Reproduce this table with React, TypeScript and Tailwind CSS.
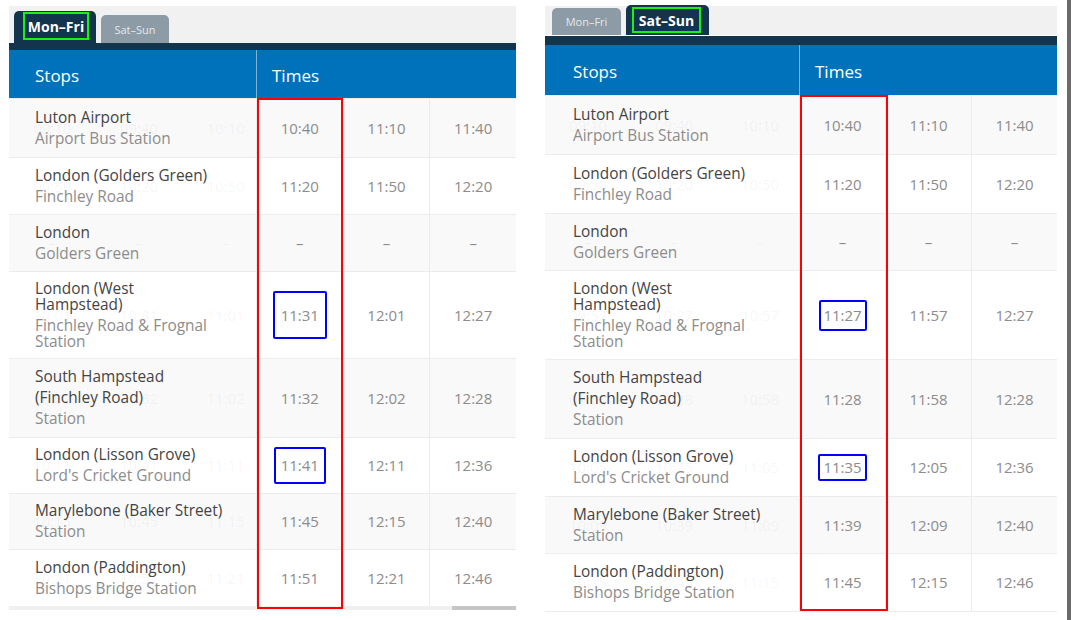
import React from "react";

type Block = { lines: string[]; sub?: boolean };
type Row = { blocks: Block[]; h: string; t: string[]; g: string[]; box?: string };

const leftRows: Row[] = [
  { blocks: [{ lines: ["Luton Airport"] }, { lines: ["Airport Bus Station"], sub: true }], h: "h-[59px]", t: ["10:40", "11:10", "11:40"], g: ["09:10", "09:40", "10:10"] },
  { blocks: [{ lines: ["London (Golders Green)"] }, { lines: ["Finchley Road"], sub: true }], h: "h-[57px]", t: ["11:20", "11:50", "12:20"], g: ["09:50", "10:20", "10:50"] },
  { blocks: [{ lines: ["London"] }, { lines: ["Golders Green"], sub: true }], h: "h-[57px]", t: ["–", "–", "–"], g: ["–", "–", "–"] },
  { blocks: [{ lines: ["London (West", "Hampstead)"] }, { lines: ["Finchley Road & Frognal", "Station"], sub: true }], h: "h-[87px]", t: ["11:31", "12:01", "12:27"], g: ["10:01", "10:31", "11:01"], box: "w-[54px] h-[48px]" },
  { blocks: [{ lines: ["South Hampstead"] }, { lines: ["(Finchley Road)"] }, { lines: ["Station"], sub: true }], h: "h-[79px]", t: ["11:32", "12:02", "12:28"], g: ["10:02", "10:32", "11:02"] },
  { blocks: [{ lines: ["London (Lisson Grove)"] }, { lines: ["Lord's Cricket Ground"], sub: true }], h: "h-[56px]", t: ["11:41", "12:11", "12:36"], g: ["10:11", "10:41", "11:11"], box: "w-[52px] h-[37px]" },
  { blocks: [{ lines: ["Marylebone (Baker Street)"] }, { lines: ["Station"], sub: true }], h: "h-[56px]", t: ["11:45", "12:15", "12:40"], g: ["10:15", "10:45", "11:15"] },
  { blocks: [{ lines: ["London (Paddington)"] }, { lines: ["Bishops Bridge Station"], sub: true }], h: "h-[57px]", t: ["11:51", "12:21", "12:46"], g: ["10:21", "10:51", "11:21"] },
];

const rightRows: Row[] = [
  { blocks: [{ lines: ["Luton Airport"] }, { lines: ["Airport Bus Station"], sub: true }], h: "h-[59px]", t: ["10:40", "11:10", "11:40"], g: ["09:10", "09:40", "10:10"] },
  { blocks: [{ lines: ["London (Golders Green)"] }, { lines: ["Finchley Road"], sub: true }], h: "h-[59px]", t: ["11:20", "11:50", "12:20"], g: ["09:50", "10:20", "10:50"] },
  { blocks: [{ lines: ["London"] }, { lines: ["Golders Green"], sub: true }], h: "h-[57px]", t: ["–", "–", "–"], g: ["–", "–", "–"] },
  { blocks: [{ lines: ["London (West", "Hampstead)"] }, { lines: ["Finchley Road & Frognal", "Station"], sub: true }], h: "h-[89px]", t: ["11:27", "11:57", "12:27"], g: ["09:57", "10:27", "10:57"], box: "w-[48px] h-[31px]" },
  { blocks: [{ lines: ["South Hampstead"] }, { lines: ["(Finchley Road)"] }, { lines: ["Station"], sub: true }], h: "h-[79px]", t: ["11:28", "11:58", "12:28"], g: ["09:58", "10:28", "10:58"] },
  { blocks: [{ lines: ["London (Lisson Grove)"] }, { lines: ["Lord's Cricket Ground"], sub: true }], h: "h-[58px]", t: ["11:35", "12:05", "12:36"], g: ["10:05", "10:35", "11:05"], box: "w-[49px] h-[27px]" },
  { blocks: [{ lines: ["Marylebone (Baker Street)"] }, { lines: ["Station"], sub: true }], h: "h-[57px]", t: ["11:39", "12:09", "12:40"], g: ["10:09", "10:39", "11:09"] },
  { blocks: [{ lines: ["London (Paddington)"] }, { lines: ["Bishops Bridge Station"], sub: true }], h: "h-[58px]", t: ["11:45", "12:15", "12:46"], g: ["10:15", "10:45", "11:15"] },
];

function Table({
  rows,
  stopW,
  colW,
  headerH,
  stopPad,
}: {
  rows: Row[];
  stopW: string;
  colW: string;
  headerH: string;
  stopPad: string;
}) {
  return (
    <div className="flex flex-col">
      <div className={`flex bg-[#0072bb] text-white text-[17px] ${headerH}`}>
        <div className={`flex items-center pt-[4px] shrink-0 ${stopW} ${stopPad}`}>Stops</div>
        <div className="flex flex-1 items-center pt-[4px] pl-[15px] border-l border-[#7fb2da]">Times</div>
      </div>
      {rows.map((r, i) => (
        <div
          key={i}
          className={`flex border-t border-[#ececec] ${r.h} ${i % 2 === 0 ? "bg-[#f9f9f9]" : "bg-white"}`}
        >
          <div className={`grid overflow-hidden shrink-0 ${stopW}`}>
            <div className="col-start-1 row-start-1 flex justify-end items-center">
              {r.g.map((x, j) => (
                <div key={j} className={`shrink-0 text-center text-[15px] text-black/[0.05] ${colW}`}>
                  {x}
                </div>
              ))}
            </div>
            <div className={`col-start-1 row-start-1 flex flex-col justify-center gap-[5px] text-[15.4px] leading-[16px] ${stopPad}`}>
              {r.blocks.map((b, k) => (
                <div key={k} className={b.sub ? "text-[#8c8c8c]" : "text-[#444444]"}>
                  {b.lines.map((l, m) => (
                    <div key={m}>{l}</div>
                  ))}
                </div>
              ))}
            </div>
          </div>
          {r.t.map((x, j) => (
            <div
              key={j}
              className={`flex shrink-0 items-center justify-center border-l border-[#ececec] text-[15px] text-[#8c8c8c] ${colW}`}
            >
              {j === 0 && r.box ? (
                <span className={`flex items-center justify-center border-2 border-[#0000ff] rounded-[2px] ${r.box}`}>
                  {x}
                </span>
              ) : (
                <span>{x}</span>
              )}
            </div>
          ))}
        </div>
      ))}
    </div>
  );
}

export default function App() {
  return (
    <div
      className="flex h-[620px] w-[1071px] bg-white overflow-hidden"
      style={{ fontFamily: '"Open Sans", "Noto Sans", sans-serif' }}
    >
      {/* Left panel */}
      <div className="relative ml-[9px] mt-[6px] w-[507px] flex flex-col self-start">
        <div className="flex items-end h-[37px] bg-[#f1f1f1] pl-[5px] gap-[5px]">
          <div className="flex items-start h-[32px] w-[82px] rounded-t-[5px] bg-[#13344d] pl-[9px] pt-[1px]">
            <span className="flex items-center justify-center w-[66px] h-[28px] border-2 border-[#19f219] text-white font-bold text-[14px]">
              Mon–Fri
            </span>
          </div>
          <div className="flex items-center justify-center h-[28px] w-[68px] rounded-t-[5px] bg-[#8c9ba5] text-[#e4e8eb] text-[11px] pt-[2px]">
            Sat–Sun
          </div>
        </div>
        <div className="h-[7px] bg-[#13344d]" />
        <Table rows={leftRows} stopW="w-[247px]" colW="w-[86.67px]" headerH="h-[48px]" stopPad="pl-[26px]" />
        <div className="flex h-[4px] bg-[#f0f0f0] justify-end">
          <div className="w-[64px] bg-[#c6c6c6]" />
        </div>
        <div className="absolute left-[248px] top-[92px] w-[86px] h-[511px] border-2 border-[#ff0000]" />
      </div>

      {/* Right panel */}
      <div className="relative ml-[29px] mt-[6px] w-[512px] flex flex-col self-start">
        <div className="flex items-end h-[30px] bg-[#f1f1f1] pl-[7px] gap-[5px] border-b border-white">
          <div className="flex items-center justify-center h-[27px] w-[69px] rounded-t-[5px] bg-[#8c9ba5] text-[#e4e8eb] text-[11px] pt-[2px]">
            Mon–Fri
          </div>
          <div className="flex items-start h-[30px] w-[83px] rounded-t-[5px] bg-[#13344d] pl-[6px] pt-[2px]">
            <span className="flex items-center justify-center w-[69px] h-[26px] border-2 border-[#19f219] text-white font-bold text-[14px]">
              Sat–Sun
            </span>
          </div>
        </div>
        <div className="h-[9px] bg-[#13344d]" />
        <Table rows={rightRows} stopW="w-[254px]" colW="w-[86px]" headerH="h-[50px]" stopPad="pl-[28px]" />
        <div className="h-[1px] bg-[#ececec]" />
        <div className="absolute left-[255px] top-[89px] w-[88px] h-[516px] border-2 border-[#ff0000]" />
      </div>

      <div className="ml-auto w-[4px] h-full bg-[#6b6b6b]" />
    </div>
  );
}
